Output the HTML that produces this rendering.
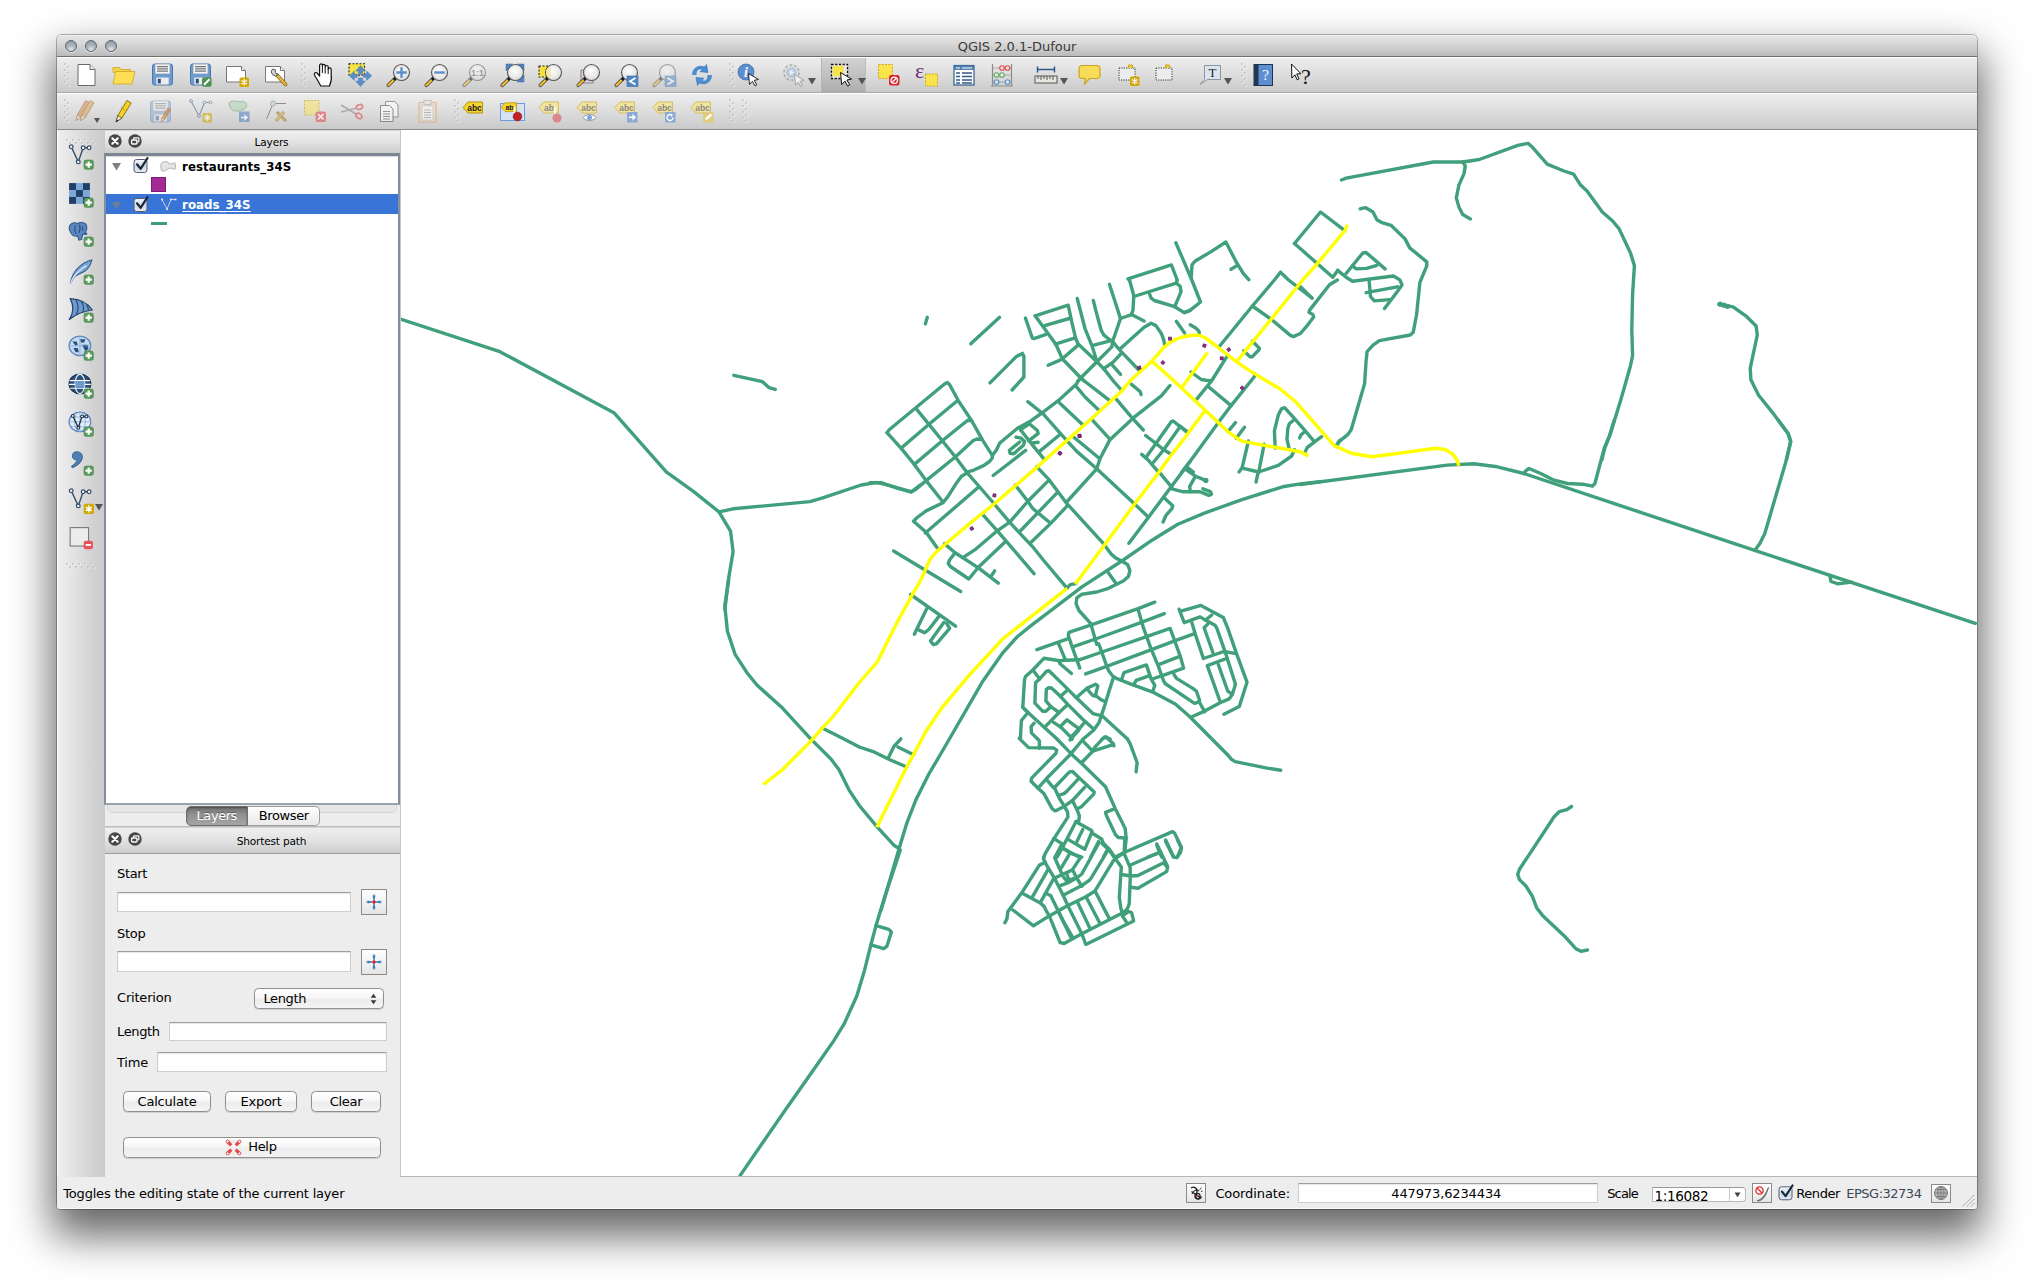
<!DOCTYPE html>
<html lang="en">
<head>
<meta charset="utf-8">
<title>QGIS 2.0.1-Dufour</title>
<style>
*{box-sizing:border-box;margin:0;padding:0}
html,body{width:2034px;height:1288px;overflow:hidden;background:#fff}
body{font-family:"DejaVu Sans","Liberation Sans",sans-serif;color:#000;position:relative}
.abs{position:absolute}
#win{position:absolute;left:57px;top:35px;width:1920px;height:1174px;background:#ededed;border-radius:5px 5px 4px 4px;
 box-shadow:0 0 0 1px rgba(0,0,0,.28),0 22px 42px 5px rgba(0,0,0,.6)}
#title{position:absolute;left:0;top:0;width:1920px;height:22px;border-radius:5px 5px 0 0;
 background:linear-gradient(#e6e6e6,#dbdbdb 35%,#cbcbcb 68%,#bababa);border-bottom:1px solid #6e6e6e;box-shadow:inset 0 1px 0 #f0f0f0}
#title .t{position:absolute;left:0;width:1920px;top:3.500px;text-align:center;font-size:13px;color:#3a3a3a;letter-spacing:0;line-height:16px}
.tl{position:absolute;top:5px;width:12px;height:12px;border-radius:50%;border:1px solid #5d6770;
 background:radial-gradient(circle at 50% 85%,#dfe6ec 0,#a9b4be 45%,#8894a0 100%);box-shadow:0 1px 0 rgba(255,255,255,.5)}
.tbar{position:absolute;left:0;width:1920px;background:linear-gradient(#ededed,#dddddd 50%,#cacaca);border-top:1px solid #fff;border-bottom:1px solid #a8a8a8}
#tb1{top:22px;height:36px}
#tb2{top:58px;height:37px;border-bottom-color:#8c8c8c}
#ltb{position:absolute;left:0;top:95px;width:47.500px;height:1046.500px;background:linear-gradient(90deg,#fff 0,#fff 1px,#efefef 1px,#e4e4e4 31%,#dbdbdb 53%,#d2d2d2 74%,#cbcbcb 100%)}
#lpanel{position:absolute;left:48px;top:94px;width:296px;height:1048px;background:#ededed;border-right:2px solid #9a9da2}
#map{position:absolute;left:344px;top:95px;width:1576px;height:1046px;background:#fff;overflow:hidden}
#status{position:absolute;left:0;top:1141px;width:1920px;height:33px;background:#ededed;border-top:1px solid #b9b9b9;border-radius:0 0 4px 4px;font-size:13px}
.dh{position:absolute;left:0;width:294px;height:25px;background:linear-gradient(#f4f4f4,#e3e3e3 50%,#cdcdcd);border-bottom:1px solid #9b9b9b;border-top:1px solid #c9c9c9}
.dh .t{position:absolute;left:0;width:100%;text-align:center;top:5px;font-size:11px;padding-left:38px}
.cb{position:absolute;width:14px;height:14px;border-radius:50%;background:#3f3f3f}
.lbl{position:absolute;font-size:13px;white-space:nowrap}
.inp{position:absolute;background:#fff;border:1px solid #c6c6c6;border-top-color:#a5a5a5;box-shadow:inset 0 1px 1px rgba(0,0,0,.08)}
.btn{position:absolute;height:20px;border:1px solid #9a9a9a;border-radius:4px;background:linear-gradient(#fff,#f3f3f3 50%,#e6e6e6 51%,#f1f1f1);font-size:13px;text-align:center;line-height:18px;box-shadow:0 1px 0 rgba(0,0,0,.08)}
.sq{position:absolute;border:1px solid #8e8e8e;background:linear-gradient(#fdfdfd,#ececec)}
svg{position:absolute;overflow:visible}
</style>
</head>
<body>
<div id="win">
<div id="title"><div class="tl" style="left:8px"></div><div class="tl" style="left:28px"></div><div class="tl" style="left:48px"></div><div class="t">QGIS 2.0.1-Dufour</div></div>
<div class="tbar" id="tb1"></div>
<div class="tbar" id="tb2"></div>
<div id="ltb"></div>
<svg width="0" height="0" style="position:absolute"><defs>
<linearGradient id="gy" x1="0" y1="0" x2="0" y2="1"><stop offset="0" stop-color="#ffe680"/><stop offset="1" stop-color="#f3cf3f"/></linearGradient>
<radialGradient id="gl" cx=".45" cy=".4" r=".6"><stop offset="0" stop-color="#fff"/><stop offset="1" stop-color="#dcdcdc"/></radialGradient>
<g id="hd"><circle cx="1.5" cy="1.5" r="1.1" fill="#fff"/><circle cx="1" cy="1" r=".9" fill="#b9b9b9"/></g>
<g id="hv"><use href="#hd" x="0" y="0"/><use href="#hd" x="3" y="3"/><use href="#hd" x="0" y="6"/><use href="#hd" x="3" y="9"/><use href="#hd" x="0" y="12"/><use href="#hd" x="3" y="15"/><use href="#hd" x="0" y="18"/><use href="#hd" x="3" y="21"/></g>
<g id="hh"><use href="#hd" x="0" y="0"/><use href="#hd" x="3" y="3"/><use href="#hd" x="6" y="0"/><use href="#hd" x="9" y="3"/><use href="#hd" x="12" y="0"/><use href="#hd" x="15" y="3"/><use href="#hd" x="18" y="0"/><use href="#hd" x="21" y="3"/><use href="#hd" x="24" y="0"/><use href="#hd" x="27" y="3"/></g>
<g id="plus"><rect x=".3" y=".3" width="8.600" height="8.600" rx="1.800" fill="#5a9a5d" stroke="#4a8a4e" stroke-width=".6"/><path d="M4.600 1.700v5.800M1.700 4.600h5.800" stroke="#fff" stroke-width="2"/></g>
<g id="star"><rect x="0" y="0" width="9.5" height="9.5" rx="1.5" fill="#d1a80a"/><path d="M4.75 1.5v6.5M1.9 3.1l5.7 3.3M7.6 3.1L1.9 6.4" stroke="#fff" stroke-width="1.2"/></g>
<g id="mag"><path d="M2.300 22.300l6.300-6.300" stroke="#3a3a3a" stroke-width="3.600" stroke-linecap="round"/><path d="M2.300 22.300l5.400-5.400" stroke="#f4c430" stroke-width="2.100" stroke-linecap="round"/><circle cx="8.900" cy="15.900" r="1.500" fill="#111"/><circle cx="15.500" cy="9.500" r="8" fill="url(#gl)" stroke="#555" stroke-width="1.100"/></g>
<g id="tag"><path d="M0 6.5L5 1h14.5v11H5z" fill="#f6d32d" stroke="#b8960f" stroke-width="1"/></g>
<g id="tagd"><path d="M0 6.5L5 1h14.5v11H5z" fill="#f3e49b" stroke="#d1bf6d" stroke-width="1"/></g>
<g id="arr"><path d="M0 0h8L4 6.500z" fill="#555"/></g>
<g id="fl"><rect x=".5" y=".5" width="20" height="21" rx="2.2" fill="#6e9bce" stroke="#4a77ad"/><rect x="3.3" y=".8" width="14.4" height="9.4" fill="#f4f4f4" stroke="#c9c9c9" stroke-width=".5"/><path d="M5 3.2h11M5 5.4h11M5 7.6h11" stroke="#555" stroke-width="1"/><rect x="4.3" y="14" width="12.4" height="7" fill="#ececec"/><rect x="5.8" y="15.3" width="3" height="4.6" fill="#2d4f7c"/></g>
<g id="pg"><path d="M1.5 .5h12l5 5v16h-17z" fill="#fff" stroke="#6a6a6a"/><path d="M13.5 .5v5h5" fill="#eee" stroke="#6a6a6a"/></g>
</defs></svg>

<svg width="6" height="24" style="left:7px;top:28px"><use href="#hv"/></svg>
<svg width="6" height="24" style="left:244px;top:28px"><use href="#hv"/></svg>
<svg width="6" height="24" style="left:672px;top:28px"><use href="#hv"/></svg>
<svg width="6" height="24" style="left:1184px;top:28px"><use href="#hv"/></svg>
<svg width="24" height="24" viewBox="0 0 24 24" style="left:17px;top:28px"><use href="#pg" x="2.5" y="1"/></svg>
<svg width="24" height="24" viewBox="0 0 24 24" style="left:55px;top:26.5px"><path d="M1 5.5h6.5l1.5 2h9.5v3H1z" fill="#f5d33f" stroke="#c9a72a" stroke-width=".8"/><path d="M3.5 9.5h19.5l-3 12.5H1z" fill="#ffdd55" stroke="#c9a72a" stroke-width=".8"/></svg>
<svg width="24" height="24" viewBox="0 0 24 24" style="left:93px;top:28px"><use href="#fl" x="2" y="0.5"/></svg>
<svg width="24" height="24" viewBox="0 0 24 24" style="left:131px;top:28px"><use href="#fl" x="2" y="0.5"/><rect x="14" y="14.3" width="9.6" height="9.4" rx="2" fill="#4f9150"/><path d="M16 21.7l5.6-5.4" stroke="#fff" stroke-width="2"/></svg>
<svg width="24" height="24" viewBox="0 0 24 24" style="left:168px;top:28px"><path d="M1.5 3.5h15l4 4v11.5h-19z" fill="#fff" stroke="#777"/><path d="M16.5 3.5v4h4" fill="#eee" stroke="#777"/><use href="#star" x="14.5" y="14.5"/></svg>
<svg width="24" height="24" viewBox="0 0 24 24" style="left:207px;top:28px"><path d="M1.5 3.5h15l4 4v11.5h-19z" fill="#fff" stroke="#777"/><path d="M16.5 3.5v4h4" fill="#eee" stroke="#777"/><path d="M13 12l8.5 9.5" stroke="#8a6d1f" stroke-width="3.8" stroke-linecap="round"/><path d="M13.5 12.5l8 9" stroke="#e9b93a" stroke-width="2.2" stroke-linecap="round"/><path d="M8.5 6a4 4 0 1 0 6 5.5l-2.2-.5-1.2-1.8.6-2.2z" fill="#d9d9d9" stroke="#555" stroke-width="1"/></svg>
<svg width="24" height="24" viewBox="0 0 24 24" style="left:255px;top:28px"><path d="M8.800 23C7.500 20.500 5 16 3 13C1.600 10.800 3 8.500 5 10L7.600 13V2.600C7.600 .4 10.400 .4 10.400 2.600V3C10.400 .8 13.200 .8 13.200 3V4C13.200 2 16.200 2 16.200 4V6.300C16.200 4.300 19.200 4.300 19.200 6.300V12C19.700 15 19.200 19 17.500 23Z" fill="#fff" stroke="#111" stroke-width="1.200" stroke-linejoin="round"/><path d="M10.400 3V10M13.200 4V10.500M16.200 6V11" stroke="#111" stroke-width="1"/></svg>
<svg width="24" height="24" viewBox="0 0 24 24" style="left:291px;top:28px"><path d="M1 .7h15.500v11.500H1z" fill="#f7e444" stroke="#222" stroke-width="1.100" stroke-dasharray="2 1.500"/><g fill="#5b8fc9" stroke="#4377b3" stroke-width=".5"><path d="M12.500 2.500l4.800 5.500h-2.800v3.500h-4v-3.500H7.700z"/><path d="M12.500 23.500l4.800-5.500h-2.800v-3h-4v3H7.700z"/><path d="M23.700 12.800l-5-4.600v2.800h-3v3.600h3v2.800z"/><path d="M1.300 12.800l5-4.600v2.800h3v3.600h-3v2.800z"/></g></svg>
<svg width="24" height="24" viewBox="0 0 24 24" style="left:329px;top:28px"><use href="#mag"/><path d="M15.500 4.300v10.400M10.300 9.500h10.400" stroke="#5b8fc9" stroke-width="2.400"/></svg>
<svg width="24" height="24" viewBox="0 0 24 24" style="left:367px;top:28px"><use href="#mag"/><path d="M10.300 9.500h10.400" stroke="#5b8fc9" stroke-width="2.400"/></svg>
<svg width="24" height="24" viewBox="0 0 24 24" style="left:405px;top:28px"><g opacity=".55"><use href="#mag"/></g><text x="15.500" y="12.800" font-family="Liberation Sans,sans-serif" font-weight="bold" font-size="8.500" text-anchor="middle" fill="#9a9a9a">1:1</text></svg>
<svg width="24" height="24" viewBox="0 0 24 24" style="left:443px;top:28px"><g fill="#4f86c6" stroke="#3a6aa5" stroke-width=".5"><path d="M6 1h7l-2.500 2.500 3 3-2 2-3-3L6 8z"/><path d="M24 1h-7l2.500 2.500-3 3 2 2 3-3L24 8z"/><path d="M24 19v-7l-2.500 2.500-3-3-2 2 3 3L17 19z"/></g><use href="#mag"/></svg>
<svg width="24" height="24" viewBox="0 0 24 24" style="left:481px;top:28px"><path d="M1 3h11v11H1z" fill="#f7e03c" stroke="#222" stroke-width="1.100" stroke-dasharray="2 1.500"/><use href="#mag"/><path d="M8 9.500a6.500 6.500 0 0 1 3-5.500h2v11h-2a6.500 6.500 0 0 1-3-5.500z" fill="#f3e7a3" opacity=".9"/></svg>
<svg width="24" height="24" viewBox="0 0 24 24" style="left:519px;top:28px"><path d="M5 7h12v13H5z" fill="#d9cfd9" stroke="#8b7b8b"/><use href="#mag"/></svg>
<svg width="24" height="24" viewBox="0 0 24 24" style="left:557px;top:28px"><use href="#mag"/><rect x="13" y="13" width="11" height="10.500" fill="#4f86c6" stroke="#3a6aa5" stroke-width=".6"/><path d="M21.500 15l-5.500 3.300 5.500 3.300" fill="none" stroke="#fff" stroke-width="1.800"/></svg>
<svg width="24" height="24" viewBox="0 0 24 24" style="left:595px;top:28px"><g opacity=".5"><use href="#mag"/><rect x="13" y="13" width="11" height="10.500" fill="#4f86c6" stroke="#3a6aa5" stroke-width=".6"/><path d="M15.500 15l5.500 3.300-5.500 3.300" fill="none" stroke="#fff" stroke-width="1.800"/></g></svg>
<svg width="24" height="24" viewBox="0 0 24 24" style="left:633px;top:28px"><g fill="#4a8fd6" stroke="#2f6fb5" stroke-width=".6"><path d="M2.500 11.500C2.500 5 9 1.500 14.500 4l2-2.500 1.500 8-8-.8 2.300-2.300C8 4.800 5.500 8 6.300 11.500z"/><path d="M21.500 12.500C21.500 19 15 22.500 9.500 20l-2 2.500-1.500-8 8 .8-2.300 2.300c4.300 1.600 6.800-1.600 6-5.100z"/></g></svg>
<svg width="24" height="24" viewBox="0 0 24 24" style="left:680px;top:28px"><circle cx="9" cy="9" r="8" fill="#5b8fd0" stroke="#3c6fb0" stroke-width=".8"/><text x="9" y="14" font-family="Liberation Serif,serif" font-style="italic" font-weight="bold" font-size="14" text-anchor="middle" fill="#fff">i</text><path d="M11.500 10.500l10 6-4.300.8 2.600 4.600-1.800 1-2.600-4.600-2.900 3.200z" fill="#fff" stroke="#111" stroke-width=".9" stroke-linejoin="round"/></svg>
<svg width="24" height="24" viewBox="0 0 24 24" style="left:725px;top:28px"><g opacity=".6"><circle cx="9.500" cy="9.500" r="7.500" fill="#e6e6e6" stroke="#8a8a8a" stroke-width="1.600" stroke-dasharray="3 1.700"/><circle cx="9.500" cy="9.500" r="4.800" fill="#a9c4e6" stroke="#7da0cc"/><path d="M8 7l4 2.500L8 12z" fill="#fff"/><path d="M12.500 11.500l9.500 6-4 .8 2.400 4.400-1.700.9-2.400-4.400-2.700 3z" fill="#fff" stroke="#777" stroke-width=".9" stroke-linejoin="round"/></g></svg>
<svg width="8" height="7" style="left:751px;top:42.5px"><use href="#arr"/></svg>
<div class="abs" style="left:764px;top:23px;width:45px;height:34px;background:linear-gradient(#d2d2d2,#bdbdbd 60%,#adadad);border-left:1px solid #b5b5b5;border-right:1px solid #bcbcbc"></div>
<svg width="24" height="24" viewBox="0 0 24 24" style="left:773px;top:28px"><rect x="1.500" y="1.500" width="16" height="14" fill="#e8e8e8" stroke="#111" stroke-width="1.300" stroke-dasharray="2.200 1.500"/><rect x="2.800" y="2.800" width="11" height="10.500" fill="#f7e34a"/><path d="M10.500 9.500l11 6.600-4.600.9 2.800 5-2 1.100-2.800-5-3.200 3.500z" fill="#fff" stroke="#111" stroke-width="1" stroke-linejoin="round"/></svg>
<svg width="8" height="7" style="left:801px;top:42.5px"><use href="#arr"/></svg>
<svg width="24" height="24" viewBox="0 0 24 24" style="left:820px;top:28px"><rect x="1.500" y="1.500" width="14" height="14" fill="#fbe34c" stroke="#c8a62a" stroke-width="1" stroke-dasharray="2 1.300"/><rect x="12" y="12" width="10.500" height="10.500" rx="2.200" fill="#d9232e"/><circle cx="17.250" cy="17.250" r="3.200" fill="none" stroke="#fff" stroke-width="1.300"/><path d="M15 19.500l4.500-4.500" stroke="#fff" stroke-width="1.300"/></svg>
<svg width="24" height="24" viewBox="0 0 24 24" style="left:858px;top:28px"><text x="0" y="15" font-family="Liberation Serif,serif" font-size="22" fill="#6b2d7a">ε</text><rect x="10.500" y="11" width="12" height="12" fill="#fbe34c" stroke="#c8a62a" stroke-width="1" stroke-dasharray="2 1.300"/></svg>
<svg width="24" height="24" viewBox="0 0 24 24" style="left:895px;top:28px"><rect x="2" y="2.500" width="20" height="19.500" fill="#fff" stroke="#2f5b8a" stroke-width="1.200"/><rect x="2" y="2.500" width="20" height="4.500" fill="#4f7fb5"/><path d="M4 5h4M10 5h10" stroke="#fff" stroke-width="1"/><path d="M4 10h4M10 10h10M4 13.500h4M10 13.500h10M4 17h4M10 17h10M4 20h4M10 20h10" stroke="#2f5b8a" stroke-width="1.400"/></svg>
<svg width="24" height="24" viewBox="0 0 24 24" style="left:933px;top:28px"><path d="M2.500 1v22M21.500 1v22M1 23h22" stroke="#8a8a8a" stroke-width="1.200" fill="none"/><path d="M2.500 5h19M2.500 12h19M2.500 19h19" stroke="#9a9a9a" stroke-width=".8"/><g fill="#f3d9d9" stroke="#d9534f" stroke-width="1.100"><circle cx="12" cy="5" r="2.300"/><circle cx="17.500" cy="5" r="2.300"/></g><g fill="#dcefd9" stroke="#6aa86a" stroke-width="1.100"><circle cx="6.500" cy="12" r="2.300"/><circle cx="12" cy="12" r="2.300"/></g><g fill="#d9e6f3" stroke="#5b8fc0" stroke-width="1.100"><circle cx="6.500" cy="19" r="2.300"/><circle cx="17.500" cy="19" r="2.300"/></g></svg>
<svg width="24" height="24" viewBox="0 0 24 24" style="left:977px;top:28px"><path d="M3.500 6.500h17M3.500 3.500v6M20.500 3.500v6" stroke="#2f5b8a" stroke-width="1.500" fill="none"/><rect x="1" y="13" width="22" height="7" fill="#e6e8dc" stroke="#555" stroke-width="1"/><path d="M4 13v3M7 13v4M10 13v3M13 13v4M16 13v3M19 13v4" stroke="#555" stroke-width="1"/></svg>
<svg width="8" height="7" style="left:1003px;top:42.5px"><use href="#arr"/></svg>
<svg width="24" height="24" viewBox="0 0 24 24" style="left:1021px;top:28px"><path d="M4 2.500h15a3 3 0 0 1 3 3v7a3 3 0 0 1-3 3h-7.500l-5 5.500 1-5.500H4a3 3 0 0 1-3-3v-7a3 3 0 0 1 3-3z" fill="#f7dc5a" stroke="#c9a51c" stroke-width="1.200"/></svg>
<svg width="24" height="24" viewBox="0 0 24 24" style="left:1060px;top:28px"><rect x="2" y="5" width="16" height="12" fill="#ececec" stroke="#333" stroke-width="1" stroke-dasharray="1.200 1.200"/><path d="M11.500 5V2h4v3" fill="#f2c935" stroke="#c9a51c" stroke-width="1"/><use href="#star" x="13" y="13.500"/></svg>
<svg width="24" height="24" viewBox="0 0 24 24" style="left:1096px;top:28px"><rect x="3" y="5" width="16" height="12" fill="#ececec" stroke="#333" stroke-width="1" stroke-dasharray="1.200 1.200"/><path d="M12.500 5V2h4v3" fill="#f2c935" stroke="#c9a51c" stroke-width="1"/></svg>
<svg width="24" height="24" viewBox="0 0 24 24" style="left:1142px;top:28px"><path d="M5.500 2.500h16v14h-13l-7.500 5 4.500-5z" fill="#dbe6f0" stroke="#8a959f" stroke-width="1"/><text x="13.500" y="14" font-family="Liberation Serif,serif" font-size="13" text-anchor="middle" fill="#222">T</text></svg>
<svg width="8" height="7" style="left:1167px;top:42.5px"><use href="#arr"/></svg>
<svg width="24" height="24" viewBox="0 0 24 24" style="left:1194px;top:28px"><rect x="3" y="1.500" width="18.500" height="21" fill="#5b8fd0" stroke="#1d3350" stroke-width="1"/><rect x="3" y="1.500" width="4.500" height="21" fill="#22384f"/><text x="14.500" y="17" font-family="Liberation Serif,serif" font-size="15" text-anchor="middle" fill="#fff">?</text></svg>
<svg width="24" height="24" viewBox="0 0 24 24" style="left:1232px;top:28px"><path d="M2.500 1l9.500 9.800-4.300.1 2.300 5-1.800.9-2.300-5-3 3.200z" fill="#fff" stroke="#111" stroke-width="1" stroke-linejoin="round"/><text x="17" y="21" font-family="Liberation Serif,serif" font-size="22" text-anchor="middle" fill="#111">?</text></svg>
<svg width="6" height="24" style="left:7px;top:64px"><use href="#hv"/></svg>
<svg width="6" height="24" style="left:397px;top:64px"><use href="#hv"/></svg>
<svg width="6" height="24" style="left:672px;top:64px"><use href="#hv"/></svg>
<svg width="6" height="24" style="left:685px;top:64px"><use href="#hv"/></svg>
<svg width="24" height="24" viewBox="0 0 24 24" style="left:18px;top:64px"><g opacity=".55"><path d="M1 21.500l1.200-5.500 8.500-14.500 3.800 2.200-8.500 14.500z" fill="#d98a4a" stroke="#8a5a2a" stroke-width=".8"/><path d="M1 21.500l1.200-5.500 3.800 2.200z" fill="#f3e2c0" stroke="#8a5a2a" stroke-width=".6"/><path d="M5.5 21.500l1.200-5.500 8.500-14.500 3.800 2.200-8.500 14.500z" fill="#e0a45a" stroke="#8a5a2a" stroke-width=".8"/><path d="M5.5 21.500l1.200-5.500 3.800 2.200z" fill="#f3e2c0" stroke="#8a5a2a" stroke-width=".6"/></g></svg>
<svg width="6" height="5" viewBox="0 0 8 6.5" style="left:36.5px;top:83px"><use href="#arr"/></svg>
<svg width="24" height="24" viewBox="0 0 24 24" style="left:55px;top:64px"><path d="M4 23l1.800-6.500L15 1.500l4.200 2.500-9.200 15z" fill="#f5d21f" stroke="#7a6a10" stroke-width=".9"/><path d="M9 8.500l4.200 2.500" stroke="#b89c14" stroke-width=".8"/><path d="M4 23l1.800-6.500 4.200 2.500z" fill="#f3e2c0" stroke="#444" stroke-width=".7"/><path d="M4 23l.7-2.600 1.700 1z" fill="#222"/></svg>
<svg width="24" height="24" viewBox="0 0 24 24" style="left:92px;top:64px"><g opacity=".42"><use href="#fl" x="1" y="1.500"/></g><g opacity=".7" transform="translate(9.500,8) scale(.68)"><path d="M4 21.500l1.200-5.500 8.500-14.500 3.800 2.200-8.500 14.500z" fill="#e08a3a" stroke="#8a5a2a" stroke-width=".8"/><path d="M4 21.500l1.200-5.500 3.800 2.200z" fill="#f3e2c0" stroke="#8a5a2a" stroke-width=".6"/></g></svg>
<svg width="24" height="24" viewBox="0 0 24 24" style="left:132px;top:64px"><g opacity=".6"><path d="M2 2l8 15 5.500-13.500h6" fill="none" stroke="#4a6a8a" stroke-width="1.100"/><circle cx="2" cy="2" r="1.400" fill="#fff" stroke="#4a6a8a"/><circle cx="10" cy="17" r="1.400" fill="#fff" stroke="#4a6a8a"/><circle cx="15.500" cy="3.500" r="1.400" fill="#fff" stroke="#4a6a8a"/><circle cx="21.500" cy="3.500" r="1.400" fill="#fff" stroke="#4a6a8a"/><use href="#star" x="13.500" y="14"/></g></svg>
<svg width="24" height="24" viewBox="0 0 24 24" style="left:169px;top:64px"><g opacity=".6"><path d="M3 5c0-4 6-3 9-2.500s8-1 8.500 3-3 5-6 6-10 2-11.500-6.500z" fill="#b5d3b5" stroke="#7da07d" stroke-width="1"/><rect x="13" y="12.500" width="10.500" height="10.500" fill="#5b86c0"/><path d="M15 17.700h3.500v-2.700l3.500 3.500-3.500 3.500v-2.700H15z" fill="#fff"/></g></svg>
<svg width="24" height="24" viewBox="0 0 24 24" style="left:208px;top:64px"><g opacity=".6"><path d="M1.500 20L8 4.500h13" fill="none" stroke="#555" stroke-width="1"/><circle cx="8" cy="4.500" r="2.600" fill="#b5d3b5" stroke="#7da07d"/><path d="M11 22l8-9M12 13l9 9" stroke="#8a6d1f" stroke-width="3"/><path d="M11.500 21.500l7-8" stroke="#e9c93a" stroke-width="1.600"/><path d="M13 14l7.500 7.500" stroke="#e08a3a" stroke-width="1.600"/></g></svg>
<svg width="24" height="24" viewBox="0 0 24 24" style="left:246px;top:64px"><g opacity=".65"><rect x="1.500" y="1.500" width="14.500" height="14.500" fill="#f3e27a" stroke="#c8a62a" stroke-width="1" stroke-dasharray="2 1.300"/><rect x="12.500" y="12.500" width="10.500" height="10.500" rx="2" fill="#e05a5f"/><path d="M15 15l5.500 5.500M20.500 15L15 20.500" stroke="#fff" stroke-width="1.700"/></g></svg>
<svg width="24" height="24" viewBox="0 0 24 24" style="left:283px;top:64px"><g opacity=".6"><path d="M1 6l15 9M1 13l16-4" stroke="#8a8a8a" stroke-width="1.500"/><ellipse cx="19.500" cy="8" rx="3.200" ry="2.300" fill="none" stroke="#d9534f" stroke-width="1.700" transform="rotate(-20 19.500 8)"/><ellipse cx="19" cy="17" rx="3.200" ry="2.300" fill="none" stroke="#d9534f" stroke-width="1.700" transform="rotate(35 19 17)"/></g></svg>
<svg width="24" height="24" viewBox="0 0 24 24" style="left:321px;top:64px"><g opacity=".6"><path d="M7.500 2.500h9l3.500 3.500v12h-12.500z" fill="#fff" stroke="#555" stroke-width=".9"/><path d="M2.500 6.500h9l3.500 3.500v12.500H2.500z" fill="#fff" stroke="#444" stroke-width=".9"/><path d="M5 12.500h7M5 15h7M5 17.500h7M5 20h7" stroke="#555" stroke-width=".9"/></g></svg>
<svg width="24" height="24" viewBox="0 0 24 24" style="left:359px;top:64px"><g opacity=".55"><rect x="3" y="3.500" width="17" height="19.500" rx="1" fill="#f0d9c0" stroke="#d99a5a" stroke-width="1.200"/><rect x="8" y="1.500" width="7" height="4" fill="#e6e6e6" stroke="#999" stroke-width=".8"/><rect x="6" y="7" width="11" height="14" fill="#fff" stroke="#aaa" stroke-width=".7"/><path d="M8 11h7M8 13.500h7M8 16h7M8 18.500h7" stroke="#888" stroke-width=".9"/></g></svg>
<svg width="24" height="24" viewBox="0 0 24 24" style="left:405px;top:64px"><use href="#tag" x="1" y="2"/><text x="12.5" y="12" font-family="Liberation Sans,sans-serif" font-weight="bold" font-size="8.500" text-anchor="middle" fill="#222">abc</text></svg>
<div class="abs" style="left:443px;top:68px;width:25px;height:18px;background:#d5e3f5;border:1px solid #6b9be0"></div>
<svg width="24" height="24" viewBox="0 0 24 24" style="left:443px;top:64px"><g transform="translate(1,3) scale(.8)"><use href="#tag"/></g><text x="9.500" y="11" font-family="Liberation Sans,sans-serif" font-weight="bold" font-size="7" text-anchor="middle" fill="#222">ab</text><path d="M14.500 8v6" stroke="#fff" stroke-width="1.600"/><circle cx="17.500" cy="17.500" r="4.300" fill="#c4202a" stroke="#8a1219" stroke-width=".7"/></svg>
<svg width="24" height="24" viewBox="0 0 24 24" style="left:481px;top:64px"><use href="#tagd" x="1" y="2"/><text x="11" y="12" font-family="Liberation Sans,sans-serif" font-weight="bold" font-size="8.500" text-anchor="middle" fill="#8a8a8a">ab</text><path d="M17 8v7" stroke="#fff" stroke-width="1.600"/><circle cx="19" cy="19" r="4.500" fill="#d9878c"/></svg>
<svg width="24" height="24" viewBox="0 0 24 24" style="left:519px;top:64px"><use href="#tagd" x="1" y="2"/><text x="12.5" y="12" font-family="Liberation Sans,sans-serif" font-weight="bold" font-size="8.500" text-anchor="middle" fill="#8a8a8a">abc</text><path d="M7 18.500c3-4 10-4 13 0-3 4-10 4-13 0z" fill="#fff" stroke="#888" stroke-width=".9"/><circle cx="13.500" cy="18.500" r="2.600" fill="#7da7d9"/></svg>
<svg width="24" height="24" viewBox="0 0 24 24" style="left:557px;top:64px"><use href="#tagd" x="1" y="2"/><text x="12.5" y="12" font-family="Liberation Sans,sans-serif" font-weight="bold" font-size="8.500" text-anchor="middle" fill="#8a8a8a">abc</text><rect x="13" y="13" width="10.500" height="10.500" fill="#8aa9d3"/><path d="M15 18.200h3.500v-2.700l3.500 3.500-3.500 3.500v-2.700H15z" fill="#fff" transform="translate(0,-.800)"/></svg>
<svg width="24" height="24" viewBox="0 0 24 24" style="left:595px;top:64px"><use href="#tagd" x="1" y="2"/><text x="12.5" y="12" font-family="Liberation Sans,sans-serif" font-weight="bold" font-size="8.500" text-anchor="middle" fill="#8a8a8a">abc</text><rect x="13" y="13" width="10.500" height="10.500" fill="#8aa9d3"/><path d="M21 18.500a3 3 0 1 1-1.500-2.600" fill="none" stroke="#fff" stroke-width="1.400"/><path d="M18.500 14.500l2.500 1.500-2 2z" fill="#fff"/></svg>
<svg width="24" height="24" viewBox="0 0 24 24" style="left:633px;top:64px"><use href="#tagd" x="1" y="2"/><text x="12.5" y="12" font-family="Liberation Sans,sans-serif" font-weight="bold" font-size="8.500" text-anchor="middle" fill="#8a8a8a">abc</text><rect x="13" y="13" width="10.500" height="10.500" fill="#e0cc7a"/><path d="M15 21.500l1-3 4.500-4 1.800 1.800-4.500 4z" fill="#fff"/></svg>
<svg width="30" height="6" style="left:9px;top:104px"><use href="#hh"/></svg>
<svg width="30" height="6" style="left:9px;top:528px"><use href="#hh"/></svg>
<svg width="26" height="26" viewBox="0 0 24 24" style="left:11px;top:109.3px"><path d="M3 2.500l6.500 14L14 3.500h5.500" fill="none" stroke="#34506b" stroke-width="1.300"/><g fill="#fff" stroke="#34506b" stroke-width="1.200"><circle cx="3" cy="2.500" r="1.700"/><circle cx="9.500" cy="16.500" r="1.700"/><circle cx="14" cy="3.500" r="1.700"/><circle cx="19.500" cy="3.500" r="1.700"/></g><use href="#plus" x="14.500" y="14.500"/></svg>
<svg width="26" height="26" viewBox="0 0 24 24" style="left:11px;top:147.45px"><rect x="1" y="1" width="6.400" height="6.400" fill="#1f3f66"/><rect x="1" y="7.4" width="6.400" height="6.400" fill="#7da7d9"/><rect x="1" y="13.8" width="6.400" height="6.400" fill="#1f3f66"/><rect x="7.4" y="1" width="6.400" height="6.400" fill="#7da7d9"/><rect x="7.4" y="7.4" width="6.400" height="6.400" fill="#1f3f66"/><rect x="7.4" y="13.8" width="6.400" height="6.400" fill="#7da7d9"/><rect x="13.8" y="1" width="6.400" height="6.400" fill="#1f3f66"/><rect x="13.8" y="7.4" width="6.400" height="6.400" fill="#7da7d9"/><rect x="13.8" y="13.8" width="6.400" height="6.400" fill="#1f3f66"/><use href="#plus" x="14.500" y="14.500"/></svg>
<svg width="26" height="26" viewBox="0 0 24 24" style="left:11px;top:185.6px"><path d="M2 3.500C4 1 7 1.200 8.500 2.500C10.500 1 14.500 1 16.500 3C18 5 17.500 9 15.800 10.800L17.300 11.300L17 12.300L14 12C13 13 13 15 12.600 17L10 17.600L9 14C6 14.500 3.500 13 2.300 10.500C1 8 1 5 2 3.500Z" fill="#5b86c0" stroke="#2f5b8a" stroke-width="1"/><path d="M7 4C6 7 6.300 10 7.500 11.500M10.500 3.500C11.500 6 11 9 10 11M13.500 5c.5 1.500 .3 3-.3 4" fill="none" stroke="#27507f" stroke-width="1"/><use href="#plus" x="14.500" y="14.500"/></svg>
<svg width="26" height="26" viewBox="0 0 24 24" style="left:11px;top:223.75px"><path d="M2 23c1-6 3-11 8-15.500S19.500 1.500 22 1c-1 4-3 8-7 10.500s-8 3-10 6z" fill="#7da7d9" stroke="#2f5b8a" stroke-width="1"/><path d="M2 23c2-6 7-12 15-17" fill="none" stroke="#e6eef8" stroke-width="1"/><use href="#plus" x="14.500" y="14.500"/></svg>
<svg width="26" height="26" viewBox="0 0 24 24" style="left:11px;top:261.9px"><path d="M2 1.500C10 2 18 5 22.500 12C14 13 6 17 1.200 20.800C5 15 5.500 8 2 1.500Z" fill="#6e9bce" stroke="#23466f" stroke-width="1.100" stroke-linejoin="round"/><path d="M7.500 2.800C10 8 9.500 13 7.500 16.500M12.500 4.500C15 9 14.500 12 13.500 14M17.300 7.300C19 10 19 11.500 18.700 12.500" fill="none" stroke="#23466f" stroke-width="1"/><use href="#plus" x="14.500" y="14.500"/></svg>
<svg width="26" height="26" viewBox="0 0 24 24" style="left:11px;top:300.05px"><ellipse cx="11" cy="10" rx="10" ry="9" fill="#c5d9ef" stroke="#5b86c0" stroke-width="1.100"/><path d="M4 6h4l1 3-2 1zM11 4h5l-1 3h-3zM13 9h5l1 4-3 2zM5 12h4l1 4H7z" fill="#2d4f7c"/><path d="M1 10h20M11 1v18" stroke="#7da7d9" stroke-width=".7"/><use href="#plus" x="14.500" y="14.500"/></svg>
<svg width="26" height="26" viewBox="0 0 24 24" style="left:11px;top:338.2px"><ellipse cx="11" cy="10" rx="10" ry="9" fill="#2d4f7c" stroke="#1d3350" stroke-width="1.100"/><path d="M1.500 7h19M1 10.500h20M2 14h18" stroke="#fff" stroke-width="1"/><ellipse cx="11" cy="10" rx="4.500" ry="9" fill="none" stroke="#fff" stroke-width="1"/><rect x="6.800" y="7.500" width="8.400" height="6" fill="#6e9bce"/><use href="#plus" x="14.500" y="14.500"/></svg>
<svg width="26" height="26" viewBox="0 0 24 24" style="left:11px;top:376.35px"><ellipse cx="11" cy="10" rx="10" ry="9" fill="#e6eef8" stroke="#5b86c0" stroke-width="1.100"/><path d="M1 10h20M11 1v18M3 5.500h16M3 14.500h16" stroke="#7da7d9" stroke-width=".7"/><ellipse cx="11" cy="10" rx="5" ry="9" fill="none" stroke="#7da7d9" stroke-width=".7"/><path d="M4.500 4.500l5 11L13 5h4" fill="none" stroke="#1d2f44" stroke-width="1.200"/><g fill="#fff" stroke="#1d2f44"><circle cx="4.500" cy="4.500" r="1.300"/><circle cx="9.500" cy="15.500" r="1.300"/><circle cx="13" cy="5" r="1.300"/><circle cx="17" cy="5" r="1.300"/></g><use href="#plus" x="14.500" y="14.500"/></svg>
<svg width="26" height="26" viewBox="0 0 24 24" style="left:11px;top:414.5px"><path d="M6 2c5-1.500 8.500 2 7 6.500S7 15 4 16.500l-.8-1.500c3-2 5-4 5.200-6C6 9.500 4 8 4 5.500 4 4 4.800 2.500 6 2z" fill="#4f7fb5" stroke="#2f5b8a" stroke-width=".8"/><use href="#plus" x="14.500" y="14.500"/></svg>
<svg width="26" height="26" viewBox="0 0 24 24" style="left:11px;top:452.65px"><path d="M3 2.500l6.500 14L14 3.500h5.500" fill="none" stroke="#34506b" stroke-width="1.300"/><g fill="#fff" stroke="#34506b" stroke-width="1.200"><circle cx="3" cy="2.500" r="1.700"/><circle cx="9.500" cy="16.500" r="1.700"/><circle cx="14" cy="3.500" r="1.700"/><circle cx="19.500" cy="3.500" r="1.700"/></g><use href="#star" x="14.500" y="14.500"/></svg>
<svg width="8" height="7" style="left:37.5px;top:468.5px"><use href="#arr"/></svg>
<svg width="26" height="26" viewBox="0 0 24 24" style="left:11px;top:490.8px"><rect x="2" y="1.500" width="17" height="17" fill="#ececec" stroke="#777" stroke-width="1"/><rect x="14.500" y="13.500" width="8.500" height="8" rx="2" fill="#e8525a"/><path d="M16.300 17.500h5" stroke="#fff" stroke-width="1.700"/></svg>
<div class="abs" style="left:47.5px;top:95px;width:295.5px;height:1046.5px;background:#ededed"></div>
<div class="abs" style="left:342.7px;top:95px;width:1.3px;height:1046.5px;background:#c4c6c9"></div>
<div class="abs" style="left:48px;top:95px;width:295px;height:23px;background:linear-gradient(#efefef,#e4e4e4 45%,#cdcdcd);border-top:1px solid #d4d4d4"></div>
<svg width="14" height="14" viewBox="0 0 14 14" style="left:51px;top:98.8px"><circle cx="7" cy="7" r="6.7" fill="#474747"/><path d="M4.300 4.300l5.400 5.400M9.700 4.300l-5.400 5.400" stroke="#fff" stroke-width="2.100" stroke-linecap="round"/></svg>
<svg width="14" height="14" viewBox="0 0 14 14" style="left:71px;top:98.8px"><circle cx="7" cy="7" r="6.7" fill="#474747"/><rect x="3.600" y="6" width="5.300" height="4" rx=".8" fill="none" stroke="#fff" stroke-width="1.300"/><path d="M5.600 5.800V4.600a.8 .8 0 0 1 .8-.8h3.700a.8 .8 0 0 1 .8 .8v2.400a.8 .8 0 0 1-.8 .8h-1" fill="none" stroke="#fff" stroke-width="1.200"/></svg>
<div class="abs" style="left:86px;top:99.4324px;font-size:10.6px;line-height:16px;letter-spacing:-0.2px;white-space:nowrap;;width:257px;text-align:center;">Layers</div>
<div class="abs" style="left:47.3px;top:118px;width:295.4px;height:652px;background:#fff;border:2px solid #848e9a;border-top:3px solid #7d8793;border-bottom-color:#9aa3ad;box-shadow:inset 0 1px 1px rgba(0,0,0,.15)"></div>
<div class="abs" style="left:49.3px;top:159px;width:291.4px;height:20px;background:#3875d7"></div>
<div class="abs" style="left:125.1px;top:124.067px;font-size:13.1px;line-height:16px;letter-spacing:0.05px;white-space:nowrap;font-family:'DejaVu Sans Condensed','DejaVu Sans',sans-serif;font-weight:bold;">restaurants_34S</div>
<div class="abs" style="left:125.1px;top:162.367px;font-size:13.1px;line-height:16px;letter-spacing:0.05px;white-space:nowrap;font-family:'DejaVu Sans Condensed','DejaVu Sans',sans-serif;font-weight:bold;color:#fff;text-decoration:underline;text-underline-offset:1.500px">roads_34S</div>
<svg width="9" height="8" viewBox="0 0 9 8" style="left:55px;top:128.2px"><path d="M0 0h9L4.500 7.500z" fill="#7f7f7f"/></svg>
<svg width="9" height="8" viewBox="0 0 9 8" style="left:55px;top:166.5px"><path d="M0 0h9L4.500 7.500z" fill="#6f7d95"/></svg>
<svg width="17" height="18" viewBox="0 0 17 18" style="left:75.5px;top:121.3px"><defs><linearGradient id="cbg159" x1="0" y1="0" x2="0" y2="1"><stop offset="0" stop-color="#f4f7fa"/><stop offset=".5" stop-color="#cfdae6"/><stop offset="1" stop-color="#e3ebf3"/></linearGradient></defs><rect x="1" y="3.500" width="13" height="13" rx="2.600" fill="url(#cbg159)" stroke="#595a78" stroke-width="1"/><path d="M4 8.300l3.600 4.500 6.900-10.600" fill="none" stroke="#182838" stroke-width="2.200" stroke-linecap="round" stroke-linejoin="round"/></svg>
<svg width="17" height="18" viewBox="0 0 17 18" style="left:75.5px;top:159.6px"><defs><linearGradient id="cbg197" x1="0" y1="0" x2="0" y2="1"><stop offset="0" stop-color="#f4f7fa"/><stop offset=".5" stop-color="#cfdae6"/><stop offset="1" stop-color="#e3ebf3"/></linearGradient></defs><rect x="1" y="3.500" width="13" height="13" rx="2.600" fill="url(#cbg197)" stroke="#595a78" stroke-width="1"/><path d="M4 8.300l3.600 4.500 6.900-10.600" fill="none" stroke="#182838" stroke-width="2.200" stroke-linecap="round" stroke-linejoin="round"/></svg>
<svg width="16.5" height="12" viewBox="0 0 16.5 12" style="left:103px;top:124.5px"><path d="M1.500 3c2.500-2 5-1.800 7 0s4.500 1 6-.5c1.500 1.500 1.300 5 .3 7-2-1.500-5-1.800-7-.5s-4 2.500-5.800 2c-1.500-2.500-1.500-6-.5-8z" fill="#e4e4e4" stroke="#a9a9a9" stroke-width=".9"/></svg>
<svg width="17" height="13" viewBox="0 0 17 13" style="left:103px;top:162px"><path d="M2 2.500l5 9.500L11 2.500h4.500" fill="none" stroke="#c5cbd4" stroke-width="1"/><g fill="#e8e8e8"><circle cx="2" cy="2.500" r="1.100"/><circle cx="7" cy="12" r="1.100"/><circle cx="11" cy="2.500" r="1.100"/><circle cx="15.500" cy="2.500" r="1.100"/></g></svg>
<div class="abs" style="left:94px;top:142px;width:15.3px;height:15.2px;background:#a62a96;border:1px solid #7a1d6e"></div>
<div class="abs" style="left:94px;top:186.8px;width:16px;height:3.3px;background:#3f9c79"></div>
<div class="abs" style="left:50px;top:770px;width:290px;height:7.5px;border:1px solid #d6d6d6;border-top:none;border-radius:0 0 5px 5px;background:#e6e6e6"></div>
<div class="abs" style="left:128.5px;top:770.5px;width:62.5px;height:20px;border:1px solid #6f6f6f;border-radius:5px 0 0 5px;background:linear-gradient(#6f6f6f,#8f8f8f 40%,#a6a6a6);box-shadow:inset 0 1px 2px rgba(0,0,0,.35)"></div>
<div class="abs" style="left:191px;top:770.5px;width:71.5px;height:20px;border:1px solid #9d9d9d;border-left:none;border-radius:0 5px 5px 0;background:linear-gradient(#fff,#f4f4f4 50%,#e9e9e9)"></div>
<div class="abs" style="left:128.5px;top:773.202px;font-size:13px;line-height:16px;letter-spacing:-0.45px;white-space:nowrap;color:#fff;text-shadow:0 -1px 0 rgba(0,0,0,.35);width:62.5px;text-align:center;">Layers</div>
<div class="abs" style="left:191px;top:773.202px;font-size:13px;line-height:16px;letter-spacing:-0.4px;white-space:nowrap;;width:71.5px;text-align:center;">Browser</div>
<div class="abs" style="left:48px;top:791px;width:295px;height:1px;background:#bdbdbd"></div>
<div class="abs" style="left:48px;top:792px;width:295px;height:25.5px;background:linear-gradient(#efefef,#e4e4e4 45%,#cdcdcd);border-top:1px solid #d4d4d4"></div>
<svg width="14" height="14" viewBox="0 0 14 14" style="left:51px;top:797.05px"><circle cx="7" cy="7" r="6.7" fill="#474747"/><path d="M4.300 4.300l5.400 5.400M9.700 4.300l-5.400 5.400" stroke="#fff" stroke-width="2.100" stroke-linecap="round"/></svg>
<svg width="14" height="14" viewBox="0 0 14 14" style="left:71px;top:797.05px"><circle cx="7" cy="7" r="6.7" fill="#474747"/><rect x="3.600" y="6" width="5.300" height="4" rx=".8" fill="none" stroke="#fff" stroke-width="1.300"/><path d="M5.600 5.800V4.600a.8 .8 0 0 1 .8-.8h3.700a.8 .8 0 0 1 .8 .8v2.400a.8 .8 0 0 1-.8 .8h-1" fill="none" stroke="#fff" stroke-width="1.200"/></svg>
<div class="abs" style="left:86px;top:797.682px;font-size:10.6px;line-height:16px;letter-spacing:-0.2px;white-space:nowrap;;width:257px;text-align:center;">Shortest path</div>
<div class="abs" style="left:48px;top:817.5px;width:295px;height:1px;background:#9f9f9f"></div>
<div class="abs" style="left:60px;top:831.102px;font-size:13px;line-height:16px;letter-spacing:-0.35px;white-space:nowrap;">Start</div>
<div class="abs" style="left:60px;top:856.5px;width:234px;height:20.3px;background:#fff;border:1px solid #cdcdcd;border-top-color:#9d9d9d;box-shadow:inset 0 1px 1px rgba(0,0,0,.1)"></div>
<div class="abs" style="left:304px;top:854px;width:26px;height:26px;border:1px solid #8a8a8a;background:linear-gradient(#fefefe,#f0f0f0 60%,#e4e4e4)"></div>
<svg width="16" height="16" viewBox="0 0 16 16" style="left:309px;top:859px"><g fill="#2f8fd6"><path d="M8 7.300L6.400 1.500h3.200zM8 8.700L6.400 14.500h3.200zM7.300 8L1.500 6.400v3.200zM8.700 8l5.800-1.600v3.200z"/></g><path d="M8 0v16M0 8h16" stroke="#3b5f8a" stroke-width=".7"/><circle cx="8" cy="8" r="1.700" fill="#e02020"/></svg>
<div class="abs" style="left:60px;top:891.202px;font-size:13px;line-height:16px;letter-spacing:-0.3px;white-space:nowrap;">Stop</div>
<div class="abs" style="left:60px;top:916.3px;width:234px;height:20.3px;background:#fff;border:1px solid #cdcdcd;border-top-color:#9d9d9d;box-shadow:inset 0 1px 1px rgba(0,0,0,.1)"></div>
<div class="abs" style="left:304px;top:914px;width:26px;height:26px;border:1px solid #8a8a8a;background:linear-gradient(#fefefe,#f0f0f0 60%,#e4e4e4)"></div>
<svg width="16" height="16" viewBox="0 0 16 16" style="left:309px;top:919px"><g fill="#2f8fd6"><path d="M8 7.300L6.400 1.500h3.200zM8 8.700L6.400 14.500h3.200zM7.300 8L1.500 6.400v3.200zM8.700 8l5.800-1.600v3.200z"/></g><path d="M8 0v16M0 8h16" stroke="#3b5f8a" stroke-width=".7"/><circle cx="8" cy="8" r="1.700" fill="#e02020"/></svg>
<div class="abs" style="left:60px;top:955.302px;font-size:13px;line-height:16px;letter-spacing:-0.2px;white-space:nowrap;">Criterion</div>
<div class="abs" style="left:197px;top:953.3px;width:130px;height:20.3px;border:1px solid #8f8f8f;border-radius:4.500px;background:linear-gradient(#ffffff,#f6f6f6 48%,#ececec 52%,#f4f4f4);box-shadow:0 1px 1px rgba(0,0,0,.13)"></div>
<div class="abs" style="left:206.4px;top:955.602px;font-size:13px;line-height:16px;letter-spacing:-0.35px;white-space:nowrap;">Length</div>
<svg width="7" height="12" viewBox="0 0 7 12" style="left:313px;top:957.5px"><path d="M3.500 .8L6.300 4.700H.7zM3.500 11.200L6.300 7.300H.7z" fill="#3a3a3a"/></svg>
<div class="abs" style="left:60px;top:989.302px;font-size:13px;line-height:16px;letter-spacing:-0.35px;white-space:nowrap;">Length</div>
<div class="abs" style="left:112px;top:986.6px;width:218px;height:19.8px;background:#fff;border:1px solid #cdcdcd;border-top-color:#9d9d9d;box-shadow:inset 0 1px 1px rgba(0,0,0,.1)"></div>
<div class="abs" style="left:60px;top:1020px;font-size:13px;line-height:16px;letter-spacing:-0.2px;white-space:nowrap;">Time</div>
<div class="abs" style="left:100px;top:1017.3px;width:230px;height:19.8px;background:#fff;border:1px solid #cdcdcd;border-top-color:#9d9d9d;box-shadow:inset 0 1px 1px rgba(0,0,0,.1)"></div>
<div class="abs" style="left:66px;top:1056.3px;width:88px;height:20.3px;border:1px solid #8f8f8f;border-radius:4.500px;background:linear-gradient(#ffffff,#f6f6f6 48%,#ececec 52%,#f4f4f4);box-shadow:0 1px 1px rgba(0,0,0,.13)"></div>
<div class="abs" style="left:66px;top:1058.7px;font-size:13px;line-height:16px;letter-spacing:-0.2px;white-space:nowrap;;width:88px;text-align:center;">Calculate</div>
<div class="abs" style="left:168px;top:1056.3px;width:72px;height:20.3px;border:1px solid #8f8f8f;border-radius:4.500px;background:linear-gradient(#ffffff,#f6f6f6 48%,#ececec 52%,#f4f4f4);box-shadow:0 1px 1px rgba(0,0,0,.13)"></div>
<div class="abs" style="left:168px;top:1058.7px;font-size:13px;line-height:16px;letter-spacing:-0.25px;white-space:nowrap;;width:72px;text-align:center;">Export</div>
<div class="abs" style="left:254px;top:1056.3px;width:70px;height:20.3px;border:1px solid #8f8f8f;border-radius:4.500px;background:linear-gradient(#ffffff,#f6f6f6 48%,#ececec 52%,#f4f4f4);box-shadow:0 1px 1px rgba(0,0,0,.13)"></div>
<div class="abs" style="left:254px;top:1058.7px;font-size:13px;line-height:16px;letter-spacing:-0.3px;white-space:nowrap;;width:70px;text-align:center;">Clear</div>
<div class="abs" style="left:66px;top:1102.3px;width:258px;height:20.3px;border:1px solid #8f8f8f;border-radius:4.500px;background:linear-gradient(#ffffff,#f6f6f6 48%,#ececec 52%,#f4f4f4);box-shadow:0 1px 1px rgba(0,0,0,.13)"></div>
<div class="abs" style="left:191.2px;top:1104.4px;font-size:13px;line-height:16px;letter-spacing:-0.3px;white-space:nowrap;">Help</div>
<svg width="17" height="17" viewBox="0 0 17 17" style="left:168px;top:1104px"><circle cx="8.500" cy="8.500" r="6.300" fill="none" stroke="#ededed" stroke-width="3.400"/><g stroke="#e8474c" stroke-width="3.200"><path d="M2.300 2.300l4 4M14.700 2.300l-4 4M2.300 14.700l4-4M14.700 14.700l-4-4"/></g><g fill="#fff" stroke="#d93a40" stroke-width=".9"><circle cx="2.600" cy="2.600" r="1.500"/><circle cx="14.400" cy="2.600" r="1.500"/><circle cx="2.600" cy="14.400" r="1.500"/><circle cx="14.400" cy="14.400" r="1.500"/></g></svg>
<div id="map"><svg width="1576" height="1046" viewBox="0 0 1576 1046" style="left:0;top:0">
<g fill="none" stroke="#40a07c" stroke-width="3.4" stroke-linecap="round" stroke-linejoin="round">
<path d="M-1 188.9 L98.9 221.7 L212.9 282.7 L265.5 342.2 L292.4 361.4 L318 381.9 L329.5 401.1 L332.1 421.6 L327 452.3 L323.9 480"/>
<path d="M318 381.9 L332.1 378.8 L408.9 371.6 L421.7 367.8 L460.2 355 L475.6 352.4 L490.9 356.2 L510.1 362.1 L519.1 355"/>
<path d="M332.8 245.3 L361.5 251.7 L367.9 257.6 L374.3 259.4"/>
<path d="M327.7 450 L323.8 475.6 L326.4 501.2 L334.1 524.3 L345.6 542.2 L355.9 555 L381.5 578.1 L409.7 608.9 L430.2 629.3 L437.9 639.6 L448.1 660.1 L458.3 675.5 L476.3 697.2 L492.9 715.2 L498.1 718.5"/>
<path d="M421.2 598.1 L443 608.9 L458.3 617 L473.7 622.2 L487.8 629.3 L505.7 637"/>
<path d="M487.8 626.8 L492.9 616.5 L499.9 608.9"/>
<path d="M496.8 617 L512.7 624.7"/>
<path d="M499.3 720 L484 766.1 L475 795.6 L469.9 814.8 L463.5 840.4 L455.8 866 L443 894.2 L432.7 910.9 L412.2 940.3 L381.5 983.9 L339.2 1045.4"/>
<path d="M475 795.6 L487.8 799.4 L490.4 802 L486 816.1 L482.7 818.6 L469.9 814.8"/>
<path d="M940.5 50 L945.1 48.2 L1032.2 32 L1061.7 32 L1078.3 29.5 L1116.8 15.4 L1127 13.3 L1130.9 16.7 L1146.2 34.1 L1162.9 41 L1172.6 44.1 L1179.6 55.1 L1186 61 L1201.3 82 L1211.6 91 L1218 98.6 L1229.5 123 L1233.4 135.8 L1231.6 164 L1230.8 199.8 L1231.6 225.5 L1229.5 235.7 L1219.3 271.6 L1209 304.9 L1203.9 317.7 L1200.8 330"/>
<path d="M1061.7 32 L1064.3 35.9 L1063 43.6 L1057.9 55.1 L1055.3 67.9 L1057.9 76.9 L1061.7 84.5 L1069.4 88.9"/>
<path d="M959.2 78.9 L964.3 77.6 L972 82 L975.9 89.7 L981 92.7 L990 95.3 L1004 108.9 L1008.7 117.9 L1025.8 131.9 L1025.8 135.8 L1018.9 152.4 L1015.6 184.5 L1012.2 202.4 L1009.2 205 L978.4 210.6 L972 215.2 L966.1 221.6 L965.1 230.6 L963.6 253.6 L950.2 299.8 L946.4 304.9 L937.4 312.1 L934.9 316.4"/>
<path d="M945.1 143.5 L961.8 123 L965.1 122.5 L984.1 138.9"/>
<path d="M951.5 135.8 L955.4 138.9 L965.6 138.4 L975.9 135.3"/>
<path d="M936.7 140.4 L945.1 147.3 L951.5 151.2 L992.5 146 L998.9 149.9 L1001 155 L996.4 161.4 L983.5 178.6"/>
<path d="M968.2 151.2 L969.5 166.5 L973.3 170.9 L988.7 169.6"/>
<path d="M965.1 162.7 L996.4 156.8"/>
<path d="M893.5 113.5 L919.5 82 L943.8 100.7"/>
<path d="M893.5 113.5 L931.8 147.3 L936.7 140.4"/>
<path d="M899 156.3 L910.5 167.8"/>
<path d="M1317.9 174.2 L1332 176.8 L1344.8 185.8 L1355.1 196 L1356.3 205 L1352.5 222.9 L1349.2 238.3 L1349.9 249.8 L1357.6 265.2 L1373 284.4 L1387.1 303.6 L1389.6 311.3 L1385.3 330"/>
<path d="M899 354.5 L1046.1 335.1 L1072.8 333.8 L1096.2 336.8 L1123 343.5 L1353.7 420.4 L1574.3 493.3"/>
<path d="M1213.3 290 L1208.2 306.7 L1203.2 318.4 L1193.9 353.5 L1191.5 356.2 L1181.5 354.2 L1166.5 353.5 L1153.1 350.2 L1139.7 343.5 L1128 338.5 L1124.7 340.8 L1123 343.5"/>
<path d="M1377.1 290 L1387.1 303.4 L1389.8 311.7 L1385.4 330.1 L1363.7 403.7 L1358.7 413.7 L1353.7 420.4"/>
<path d="M1428.9 445.5 L1429.9 451.5 L1437.2 453.8 L1450.6 452.1"/>
<path d="M1170.5 676.5 L1165.9 679.6 L1158.2 681.7 L1153.1 686.8 L1118.5 739.3 L1116.7 744.4 L1118.5 749.6 L1124.9 756 L1131.3 766.2 L1135.6 777.7 L1141.5 785.4 L1163.3 805.9 L1174.8 818.7 L1180 821.3 L1186.4 820"/>
<path d="M826.9 625 L830.2 629.1 L834.1 631.7 L866.1 638.1 L879.7 640.2"/>
<path d="M486 302.7 L488.2 299.7 L543.5 254 L546.4 252.5 L548.7 254.8 L557.5 271 L570.8 290.9 L581.1 309.3 L591.4 325.6 L595.1 320.4 L598.8 313 L616.5 298.3 L629.8 290.9 L642.3 282 L657.8 270.2 L675.5 254 L677 251"/>
<path d="M486 302.7 L500 318.2 L513.3 334.4 L525.1 350.6 L542 372"/>
<path d="M591.4 325.6 L591.1 328.2 L588.5 331.5 L582.6 335.6 L572.3 340.3 L565.6 342.1"/>
<path d="M565.6 343.3 L560.5 346.2 L554.6 354.3 L547.2 366.1 L542 372.8 L525.1 380.9 L516.2 387.5 L512.5 391.2 L525.1 402.3 L536.1 417.8"/>
<path d="M500 318.2 L528 294.3 L556.3 270.7"/>
<path d="M513.3 334.4 L541.3 310.8 L566.7 290.2 L570.8 290.9"/>
<path d="M525.1 350.6 L554.3 327 L572.3 310.5 L575.9 309 L581.1 309.3"/>
<path d="M469 352.8 L480.8 352.8 L495.6 358 L510.3 361.7 L514.7 359.5 L525.1 350.6"/>
<path d="M515.5 279.1 L528 294.3 L541.3 310.8 L554.6 327.3 L565.6 342.1 L578.2 356.5 L592.9 373.5 L607.7 391.2 L618 402.3 L631.3 416.3 L642.3 430 L666.2 458.3"/>
<path d="M626.8 271.7 L642.3 284 L660 304.2 L675.5 321.1 L695.7 338.8 L732.3 372.8 L747.5 387.2"/>
<path d="M619.5 299.7 L630.5 313.8 L642.5 328.4"/>
<path d="M635.7 336.6 L648.2 349.9 L665.2 372.8 L701.6 412.6 L710.5 424.4 L714.9 428.1 L720.8 431"/>
<path d="M619.5 299.7 L628.3 293.8 L636.4 300.5 L637.2 303.4 L627.6 310.8"/>
<path d="M631.3 313 L637.2 312.3"/>
<path d="M615 307.1 L620.2 308.2 L623.6 311.5 L622.4 315.2 L612.8 323.8 L609.1 323.3 L608.4 320.4 L618.7 312"/>
<path d="M592.2 345.5 L624.6 320.4"/>
<path d="M638.6 321.4 L659 304.5"/>
<path d="M665.2 372.5 L695.7 338.8 L699.1 328.5 L708.7 310.1 L732.3 287.9 L760.3 265.8 L769 255.5"/>
<path d="M614.3 355.1 L626.8 371.3 L631.3 377.9 L636.4 382.4 L649 392.7"/>
<path d="M648.2 349.9 L627.1 371 L608.4 392.4 L596.2 400.8 L575.2 418.8 L563.4 426.6"/>
<path d="M629.1 413.3 L649.7 393.4 L666.4 375.7"/>
<path d="M619.5 400.8 L637.2 382.4 L656 362.9"/>
<path d="M581.8 384.6 L595.9 400.3 L633 443.6"/>
<path d="M524.3 403 L577.4 357.3"/>
<path d="M634.1 185.8 L667.2 175.2 L670.7 191.7 L674.6 208.2 L677 213.7 L679.3 216.1 L695.9 231.8 L702.9 238.9 L712.4 251"/>
<path d="M634.1 185.8 L644.7 200.3 L655 214.5 L661.3 228.7 L680.1 248.3 L683.3 251"/>
<path d="M643.6 195.6 L668.3 188.5"/>
<path d="M654.2 214.1 L674.2 207.8"/>
<path d="M624.4 188 L631.4 208.2 L632.9 208.6 L645.1 204.3"/>
<path d="M647.1 235.3 L661.3 229.1"/>
<path d="M661.3 228.7 L677.4 214.9"/>
<path d="M676.2 168.5 L684.1 198.8 L691.1 216.1 L695.9 231.8"/>
<path d="M692.3 170.5 L695.9 184.6 L700.2 200.3 L702.9 205.1 L707.7 209 L711.6 211.4 L714.7 215.3 L720.2 221.6 L738.3 240.5"/>
<path d="M691.9 215.3 L710 210.6"/>
<path d="M708.4 154.3 L719.5 188.5 L715.5 200.3 L711.6 211.4 L710.8 216.9 L695.9 231.8 L680.9 246.8 L677 251"/>
<path d="M728.5 150 L732.8 165.7 L732 179.9 L730.5 184.6 L719.5 188.5"/>
<path d="M730.5 184.6 L743.1 190.9"/>
<path d="M732.8 166.5 L775.3 153.1 L776.1 150"/>
<path d="M775.3 153.1 L779.2 156.3 L780 161.8 L773.7 176.7"/>
<path d="M748.6 164.2 L750.1 168.1 L753.3 170.5 L773.7 176.7 L783.2 182.6 L789 180.7"/>
<path d="M718.7 219.2 L743.1 197.2 L750.1 193.3 L754.9 195.6 L760.4 203.5 L762.7 209.8 L763.9 216.1"/>
<path d="M775.3 191.3 L783.6 203.1"/>
<path d="M702.5 238.9 L712.4 231.8 L720.2 223.5"/>
<path d="M711.6 235.3 L719.5 244.4"/>
<path d="M783.2 182.6 L789 180.4 L799.5 172 L790.8 150 L774.9 112.8"/>
<path d="M789.2 194.8 L794.7 198 L797.9 201.1 L798.3 203.5"/>
<path d="M879.5 142.3 L873.4 150 L851.4 176 L818.3 216.5"/>
<path d="M851.4 176 L870.2 189.3 L889.1 205.1 L892.3 206.6 L899.4 203.5 L904.9 197.2 L912.7 187 L911.9 184.6 L908 182.3 L908.8 179.9 L928.5 154.7 L936.3 150"/>
<path d="M879.5 142.3 L887.6 150 L911.2 168.1"/>
<path d="M851.4 211 L858.4 218.4 L857.7 220 L851.4 226.7 L849 226.7 L842.7 220.8"/>
<path d="M790 242 L800.2 249.5 L805 250.3 L810.5 251"/>
<path d="M825.8 226.7 L810.5 251 L795.9 268.9"/>
<path d="M806.9 256.3 L830.1 275.6"/>
<path d="M854.5 244.4 L852.9 247.3 L830.1 275.6 L818.3 291.3 L786.1 335.4 L747.5 387.2 L727.9 413.3"/>
<path d="M834.5 292.5 L827 301.6"/>
<path d="M843.5 297.2 L835.2 308.3"/>
<path d="M847.4 311 L841.1 337.8 L838 342"/>
<path d="M863.2 314.2 L857.7 342"/>
<path d="M841.1 338.1 L857.7 342 L877.3 335.4 L890.7 326 L893.5 319.7"/>
<path d="M874.2 318.1 L873.4 300.8 L877.3 285.1 L880.5 278.8 L883.6 277.6 L893.1 288.2 L904.9 301.6 L913.5 311.8 L920.6 306.7"/>
<path d="M913.5 311.8 L906.4 317.3 L904.1 322"/>
<path d="M893.1 289.8 L888.3 293.7 L886.8 298.4 L886 309.4 L888.3 319.7"/>
<path d="M903.3 302 L900.1 304.7 L898.6 307.9"/>
<path d="M939 310.2 L935.5 316.5"/>
<path d="M779 296.1 L785.3 301.6"/>
<path d="M786.9 337.8 L792.4 342"/>
<path d="M680.1 248.3 L683.3 251 L695.9 260.6 L708.4 270.3"/>
<path d="M712.4 251 L720.2 259.9"/>
<path d="M715.5 269.3 L731.3 288.2 L742.3 300"/>
<path d="M675.4 256.7 L684.1 267 L698.2 280.5"/>
<path d="M691.9 290.6 L708.4 308.6"/>
<path d="M658.1 272.5 L682.5 295.4"/>
<path d="M673.1 307.5 L684.1 316.5 L698.2 328.3"/>
<path d="M730.5 254.4 L739.1 261.5 L740.1 264.6"/>
<path d="M744.6 305.5 L754.9 313.4 L762.7 319.7 L769.8 324"/>
<path d="M740.7 324.4 L747 329.9 L756.4 340.9 L758 342"/>
<path d="M745.4 326.7 L754.9 313.4 L770.6 291.3 L772.2 291 L778.5 296.1 L786.3 301.6"/>
<path d="M752.5 332.2 L762.7 319.7 L778.5 297.6"/>
<path d="M789 331.5 L780.8 342"/>
<path d="M480.1 780 L498.1 718.5 L505.7 693.4 L514.7 670.3 L527.5 644.7 L545.5 614 L581.1 552.3 L601.8 522.8 L616.5 506.5 L631.3 494.7 L681 456.9 L720.8 431 L751.8 409.7 L776.8 394.2 L803.4 383.1 L840.3 369.8 L881.6 356.8 L899.3 353.9 L919 351.8"/>
<path d="M664.7 459.1 L669.2 454.7 L675.1 453.6"/>
<path d="M720.8 431 L726.7 434.7 L728.9 440.6 L727.4 446.5 L722.3 451 L707.5 458.3 L695.7 462 L681 464.2 L675.8 467.9 L675.1 473.8 L678 480.5 L689.8 493.7 L695.7 514.4"/>
<path d="M706.8 442.1 L714.9 453.2"/>
<path d="M758 341.9 L770.9 357.3"/>
<path d="M785 339.6 L794.5 346.2 L803.4 349.9"/>
<path d="M794.5 346.2 L788.6 356.6 L789.4 361.7"/>
<path d="M770.9 358.8 L781.3 361.7 L789.4 361.7 L799 361.7 L807.8 365.4 L810.5 364.2 L809.3 361.7 L801.9 358.8"/>
<path d="M762.8 367.6 L771.7 375.7 L770.9 378.7 L765 385.3 L762.1 392"/>
<path d="M857.2 342.5 L855 352.1"/>
<path d="M543.5 413.6 L553.8 422.5 L577.4 437.9 L597.3 453.1"/>
<path d="M553.8 423.2 L548.7 429.8 L547.2 433.5 L549.4 436.5 L567.8 449 L577.4 437.2 L604 412.1"/>
<path d="M590.7 445.3 L593.7 440.9"/>
<path d="M492.6 421 L559.7 461.5"/>
<path d="M509.6 464.5 L554.6 496.2"/>
<path d="M525.8 478.5 L513.3 504.3"/>
<path d="M517.7 499.9 L523.6 502.8 L528 499.2 L538.3 485.9"/>
<path d="M545.7 493.3 L548.7 498.4 L535.4 513.9 L532.4 514.7 L529.5 511 L542.8 492.5"/>
<path d="M526.3 187.3 L524.4 193.9"/>
<path d="M598.6 187.3 L569.8 213.8"/>
<path d="M589 252.9 L615.5 226.4 L621.4 223.4 L622.9 226.4 L622.9 247 L611.1 260"/>
<path d="M728.5 150 L726.9 148.9 L770.4 134.9 L776.2 150"/>
<path d="M790.2 148.2 L791 134.9 L793.9 131.2 L810.1 121.6 L824.9 112 L835.2 132 L842.6 143.8 L847.8 149.7"/>
<path d="M830 139.3 L835.9 135.6"/>
<path d="M697.6 513.8 L698.7 516.4 L705.1 534.3 L707.6 540.7 L711.5 545.8 L715.3 548.4 L732 554.8 L751.2 561.8 L774.3 574 L788.3 586.2 L826.8 625"/>
<path d="M678.8 538.1 L670.5 515.1 L667.3 505.5 L667.9 502.3 L691 494.6 L737.1 478.6 L753.8 472.2"/>
<path d="M635.9 519.6 L667.3 508.7"/>
<path d="M673.1 516.4 L697.4 508 L739.7 492.7 L763.4 483.7"/>
<path d="M678.2 529.8 L702.5 521.5 L744.8 506.8 L769.1 498.4 L774.3 512.5 L779.4 526.6 L782.6 538.1 L762.7 545.2 L751.2 549"/>
<path d="M684.6 543.9 L706.4 536.2 L753.8 518.3 L774.3 510.6 L793.5 503.6"/>
<path d="M758.2 534.3 L778.1 526.6"/>
<path d="M737.1 479.2 L742.2 497.2 L749.9 518.3 L757.6 536.9 L762.1 549.7 L764 553.5 L793.5 573.4 L797.3 572.1 L798.6 570.2 L795.4 561.2 L792.2 558.6 L775.5 548.4 L773 544.5"/>
<path d="M657.7 513.8 L664.1 529.2"/>
<path d="M720.5 549.7 L723 542.6 L745.4 534.9 L749.9 548.4 L753.8 555.4 L751.8 561.2"/>
<path d="M732.6 554.8 L735.2 550.3 L748 545.8"/>
<path d="M712.1 548.4 L707.6 562.5 L703.8 575.3 L700.6 584.9 L698.1 592.6 L692.6 600.2 L682.2 609"/>
<path d="M780 481.1 L799.9 475.4 L822.3 487.5 L826.8 498.4 L835.7 524.1 L846 552.2 L838.3 576.6 L822.9 584.3"/>
<path d="M778.1 479.2 L783.2 492.7 L799.2 486.9 L804.4 490.1 L814 495.2 L815.9 498.4 L824.2 522.1 L834.5 554.2 L831.3 564.4 L828.1 568.9 L819.1 572.7 L803.7 581.1 L790.9 586.8"/>
<path d="M804.4 490.1 L810.8 485"/>
<path d="M790.9 492.7 L794.1 503.6 L802.4 528.5 L822.9 521.5 L833.8 523.4"/>
<path d="M806.9 493.9 L803.1 497.8 L812 522.8"/>
<path d="M825.5 528.5 L806.3 535.6 L819.1 571.5"/>
<path d="M817.2 534.3 L826.8 561.2 L830.6 563.8"/>
<path d="M798 571.5 L803.7 581.7"/>
<path d="M678.2 529.8 L664.3 530.2 L658.8 530.7 L642.9 528.3 L631.8 540 L624.5 546.6 L623.5 549.7 L621.8 577.4 L627 582.5 L620.4 590.5 L619.4 609"/>
<path d="M658.1 531.1 L658.8 533.5 L670.5 543.5"/>
<path d="M632.1 540.4 L638.7 549"/>
<path d="M649.8 576.7 L644.9 581.2 L641.5 581.2 L633.9 573.2 L634.6 552.5 L638.7 549 L645.6 541.1 L648 540.7 L667 559.4 L675.3 567.7 L691.9 583.6 L698.8 585.3"/>
<path d="M649.8 576.7 L644.9 570.8 L645.3 559.4 L647.7 557.7 L650.5 558 L659.4 566.3 L667 574.6 L682.2 589.8 L692.6 599.1"/>
<path d="M649.8 576.7 L658.1 582.5"/>
<path d="M643.5 597.4 L658.1 582.5 L666.7 574.6"/>
<path d="M659.4 566.6 L665.7 560.8"/>
<path d="M621.8 577.4 L627 582.5 L643.5 597.4 L656 609"/>
<path d="M675.3 567.7 L685.7 558.4 L694.7 554.2 L696.8 555.9 L694.7 564.2 L695.4 566 L699.5 569.4 L704 571.5"/>
<path d="M685.7 558.7 L691.9 565.6 L695.4 566.2"/>
<path d="M700.2 585 L726.5 609"/>
<path d="M652.2 592.2 L660.5 597.7 L669.8 607.1 L671.2 609"/>
<path d="M669.8 607.1 L678.1 598.8 L682.6 593.6"/>
<path d="M659.1 596.7 L666 589.8 L678.1 598.8"/>
<path d="M633.2 593.2 L630.1 596.7 L630.4 602.9 L636.6 609"/>
<path d="M700.9 609 L705 607.1 L709.2 609"/>
<path d="M619.3 609 L618.2 608.4 L627.6 617.6 L652.7 618 L655.7 620.2 L655 623.2 L630.6 648.1 L630.1 651.3 L637 658.2 L642.9 663.6 L651.3 678.9 L654.2 680.9 L663.1 676.4 L671.5 670.5"/>
<path d="M636.7 609 L638.4 610.8 L638.4 618.2"/>
<path d="M656 609 L670 623.7 L682.8 635.5 L704.5 656.7 L714.4 678.9 L724.2 698.6 L725.2 708.5 L723.7 722.3 L714.4 727"/>
<path d="M682.2 609 L670 623.7 L645.3 648.8 L637 658.2"/>
<path d="M671.2 609 L669 609.9 L677.9 600"/>
<path d="M682.8 611.8 L691.7 621.2"/>
<path d="M680.8 632.5 L691.7 621.2 L711.4 614.8 L712.9 615.8 L712.4 613.8 L705 606.9 L703.5 606.9 L693.7 617.3 L691.7 621.2"/>
<path d="M726.5 609 L729.2 613.8 L736.1 632.5 L735.1 641.9"/>
<path d="M645.3 649.3 L650.3 655.2 L654.2 659.2 L658.2 668 L663.1 675.9 L666.5 681.8 L667 686.8 L652.2 709.9 L643.9 724.2 L642.9 727"/>
<path d="M653.7 657.2 L668.5 641.9 L671.5 641.4 L693.2 662.1 L692.7 664.1 L680.8 676.4 L676.9 678.4"/>
<path d="M658.2 665.1 L663.1 663.6 L666 661.1 L676.9 649.3"/>
<path d="M671.5 670.5 L683.8 657.2"/>
<path d="M671.5 670.5 L676.9 681.8 L678.4 685.8 L677.9 690.7 L674.9 691.7"/>
<path d="M674.9 691.7 L690.7 700.6 L691.7 703.5 L700.6 709 L702.5 713.4 L708.4 719.3 L713.4 727"/>
<path d="M674.9 691.7 L662.1 716.4 L656.2 727"/>
<path d="M667 709.4 L683.8 719.3 L690.7 702.5"/>
<path d="M681.8 699.6 L675.9 711.4"/>
<path d="M652.7 708.5 L662.1 714.4"/>
<path d="M662.1 718.3 L670 723.3 L680.8 727"/>
<path d="M697.6 711.4 L689.7 727"/>
<path d="M705.5 721.3 L702.5 727"/>
<path d="M713.4 678.9 L704.5 682.3 L705.5 685.8 L714.4 704.5 L717.3 707.5 L724.7 708"/>
<path d="M723.7 722.3 L771.6 701.6 L773.5 703 L780.4 717.3 L776.5 727"/>
<path d="M755.8 715.4 L760.7 727"/>
<path d="M764.7 711.4 L772.5 727"/>
<path d="M746.9 727 L756.8 723.3"/>
<path d="M642.9 727 L642.4 728.7 L645.3 734.7 L654.2 749.4 L662.1 765.2 L668 778 L680.8 803.7 L684.8 814.5 L732.6 790.9 L730.6 782.5 L727.7 781.5 L721.3 785.9 L725.2 791.8"/>
<path d="M644.4 732.2 L638.4 735.1 L620.7 762.8 L606.9 781.5 L605.9 788.9 L603.9 792.8"/>
<path d="M622.2 763.7 L639.4 773.1 L642.9 776.1 L645.3 781 L648.3 785.9 L659.1 812.5 L663.1 813.5 L679.9 804.2 L720.3 783.5"/>
<path d="M611.8 780 L632.5 795.8 L648.3 785.9 L664.1 777 L684.8 766.7 L693.7 761.3 L712.4 730.7 L714.4 728.2"/>
<path d="M662.1 765.2 L681.8 754.9 L688.2 750.4 L690.2 748 L706.5 720.8"/>
<path d="M658.7 755.9 L668 752.4 L676.9 747 L680.8 744 L697.6 713.5"/>
<path d="M653.7 748 L671 740.1"/>
<path d="M631 767.7 L647.3 739.1"/>
<path d="M639.9 771.6 L652.2 749.4"/>
<path d="M646.8 764.2 L649.8 765.7 L662.1 790.9 L671.5 807.1"/>
<path d="M657.2 781 L670 807.6"/>
<path d="M676.9 773.1 L688.7 797.8"/>
<path d="M685.8 768.2 L698.6 792.8"/>
<path d="M694.2 761.3 L708.4 788.9"/>
<path d="M661.1 713.9 L653.7 727.7 L662.1 746.5 L666 751.4"/>
<path d="M662.1 718.4 L679.4 727.7 L671.5 739.6 L674.9 746.5 L680.8 756.3"/>
<path d="M668 724.8 L660.1 738.1"/>
<path d="M666 744.5 L668 750.4 L673.9 748"/>
<path d="M700.6 713 L708.4 720.4 L720.3 737.1 L718.3 767.2 L719.8 778 L721.3 783"/>
<path d="M723.7 710 L723.2 723.8 L729.2 737.6 L729.2 749.4 L728.2 774.1 L726.2 779 L721.3 783.5"/>
<path d="M714.4 728.2 L723.2 722.8"/>
<path d="M730.1 734.7 L759.7 721.8"/>
<path d="M720.3 744.5 L730.1 746 L737 745.5 L762.7 732.7 L766.6 737.6 L765.6 741.6 L737 758.3 L730.1 757.3"/>
<path d="M755.8 713.9 L766.6 736.6"/>
<path d="M764.7 710 L772.5 726.8 L775.5 727.7 L779.4 722.8 L780.4 717.9 L776.5 710"/>
</g>
<g fill="none" stroke="#ffff00" stroke-width="3.4" stroke-linecap="butt" stroke-linejoin="round">
<path d="M362.3 654.5 L381.5 639.6 L409.7 611.4 L421.2 598.1 L432.7 585.8 L458.3 552.5 L476.3 532 L484 516.6 L496.8 491 L510.9 465.4 L519.8 450 L528.7 430 L532.4 425.1 L538.3 419.2 L572.3 390.5 L593.7 373.5 L635.7 337.4 L690.3 288.7 L719.8 262.1 L728.9 251 L750.9 231 L762.7 217.6 L768.2 212.9 L774.5 209.4 L781.6 207 L789 205.5 L792.4 205.1 L798.7 205.5 L805 208.2 L835.6 231.8 L845.9 238.9 L865.5 251 L878.9 258.7 L894.6 271.7 L933.2 315.7 L934.9 316.4 L950.2 323.3 L970.7 326.7 L1001.5 322.8 L1034.8 318.2 L1045 319.8 L1052.7 324.9 L1051.1 323.4 L1056.1 330.1 L1057.8 335.8"/>
<path d="M750.9 231 L773 251 L804.2 280.3 L827.8 302.4 L838.8 310.2 L841.9 311.4 L900.1 322 L907.2 326"/>
<path d="M946.4 94.8 L943.8 100.7 L914.4 135.8 L901.7 150 L870.2 189.3 L851.4 212.1 L835.6 231.8"/>
<path d="M806.5 222.4 L781.4 256.7"/>
<path d="M804.2 280.3 L779 314.2 L770.6 324.4 L758 342 L734.5 372.8 L703.1 415.6 L674.3 453.9"/>
<path d="M666.2 458.3 L637.7 480.7 L601.8 508.9 L568.5 544.8 L541.6 576.8 L525 601.2 L512.7 624.2 L505.7 637 L491.7 665.2 L475.8 697.2"/>
</g>
<g fill="#a3279a" stroke="#4a0f45" stroke-width=".6">
<rect x="767.5" y="207.1" width="3" height="3" transform="rotate(0 769 208.6)"/>
<rect x="760.4" y="231.1" width="3" height="3" transform="rotate(37 761.9 232.6)"/>
<rect x="736.8" y="236.2" width="3" height="3" transform="rotate(74 738.3 237.7)"/>
<rect x="801.9" y="214.2" width="3" height="3" transform="rotate(21 803.4 215.7)"/>
<rect x="826.3" y="218.1" width="3" height="3" transform="rotate(58 827.8 219.6)"/>
<rect x="819.2" y="226.8" width="3" height="3" transform="rotate(5 820.7 228.3)"/>
<rect x="839.6" y="256.4" width="3" height="3" transform="rotate(42 841.1 257.9)"/>
<rect x="677.1" y="304.4" width="3" height="3" transform="rotate(79 678.6 305.9)"/>
<rect x="657.4" y="321.7" width="3" height="3" transform="rotate(26 658.9 323.2)"/>
<rect x="569.3" y="397.1" width="3" height="3" transform="rotate(63 570.8 398.6)"/>
<rect x="591.9" y="363.9" width="3" height="3" transform="rotate(10 593.4 365.4)"/>
<rect x="657.4" y="321.8" width="3" height="3" transform="rotate(47 658.9 323.3)"/>
<rect x="677" y="304.4" width="3" height="3" transform="rotate(84 678.5 305.9)"/>
</g>
<g fill="#40a07c">
<circle cx="804.9" cy="350.4" r="2.6"/>
<circle cx="1319.2" cy="174.2" r="2.6"/>
<circle cx="1323" cy="175.2" r="2.6"/>
<circle cx="1326.4" cy="176.3" r="2.6"/>
</g>
</svg></div>
<div class="abs" style="left:0px;top:1141.5px;width:1920px;height:32.5px;background:#ededed;border-radius:0 0 4px 4px;box-shadow:inset 0 -1px 0 #fafafa"></div>
<div class="abs" style="left:343px;top:1141.3px;width:1577px;height:1px;background:#b5b5b5"></div>
<div class="abs" style="left:6.3px;top:1151px;font-size:13px;line-height:16px;letter-spacing:-0.2px;white-space:nowrap;">Toggles the editing state of the current layer</div>
<div class="abs" style="left:1129px;top:1148.2px;width:20px;height:20px;border:1px solid #8a8a8a;background:linear-gradient(#fefefe,#f0f0f0 60%,#e4e4e4)"></div>
<svg width="16" height="16" viewBox="0 0 16 16" style="left:1131px;top:1150px"><path d="M3 3c3-2 6 0 6 3s-2 5-1 7c1.500 2 5 1 5.500-1.500" fill="none" stroke="#222" stroke-width="1.300"/><path d="M4 9c1-3 4-5 7-3M3.500 6.500l9 6" fill="none" stroke="#222" stroke-width="1.100"/><circle cx="9.500" cy="11" r="2.600" fill="none" stroke="#222" stroke-width="1.200"/><circle cx="9.500" cy="11" r="1" fill="#c33"/><path d="M11.500 4.500l2-1.500M13 6.500l1.500-.5" stroke="#222" stroke-width=".9"/></svg>
<div class="abs" style="left:1158.4px;top:1151.3px;font-size:13px;line-height:16px;letter-spacing:-0.1px;white-space:nowrap;">Coordinate:</div>
<div class="abs" style="left:1241px;top:1148.4px;width:299.5px;height:19.4px;background:#fff;border:1px solid #cdcdcd;border-top-color:#9d9d9d;box-shadow:inset 0 1px 1px rgba(0,0,0,.1)"></div>
<div class="abs" style="left:1241px;top:1151.3px;font-size:13px;line-height:16px;letter-spacing:-0.12px;white-space:nowrap;;width:296.5px;text-align:center;">447973,6234434</div>
<div class="abs" style="left:1550.2px;top:1151.3px;font-size:13px;line-height:16px;letter-spacing:-0.85px;white-space:nowrap;">Scale</div>
<div class="abs" style="left:1595px;top:1152.3px;width:93.5px;height:14.7px;background:#fff;border:1px solid #b9b9b9;border-top-color:#9a9a9a;border-radius:0 4px 4px 0"></div>
<div class="abs" style="left:1672px;top:1153px;width:1px;height:13.3px;background:#c9c9c9"></div>
<div class="abs" style="left:1597.6px;top:1152.79px;font-size:13.6px;line-height:16px;letter-spacing:-0.4px;white-space:nowrap;">1:16082</div>
<svg width="7" height="6" viewBox="0 0 7 6" style="left:1677px;top:1156.5px"><path d="M.5 .5h6L3.500 5.200z" fill="#444"/></svg>
<div class="abs" style="left:1695px;top:1148.2px;width:20px;height:20px;border:1px solid #8a8a8a;background:linear-gradient(#fefefe,#f0f0f0 60%,#e4e4e4)"></div>
<svg width="17" height="17" viewBox="0 0 17 17" style="left:1697px;top:1149.5px"><path d="M3 15.500c4-.5 7.500-4 11.500-13-2 7-4.500 12-9.500 13.500z" fill="#8a8a8a" stroke="#555" stroke-width=".7"/><circle cx="5.500" cy="5.500" r="3.600" fill="#fff" stroke="#e0252b" stroke-width="1.300"/><path d="M3 3l5 5" stroke="#e0252b" stroke-width="1.300"/></svg>
<svg width="17" height="18" viewBox="0 0 17 18" style="left:1720.5px;top:1148px"><defs><linearGradient id="cbgs" x1="0" y1="0" x2="0" y2="1"><stop offset="0" stop-color="#f4f7fa"/><stop offset=".5" stop-color="#cfdae6"/><stop offset="1" stop-color="#e3ebf3"/></linearGradient></defs><rect x="1" y="3.800" width="13" height="13" rx="2.600" fill="url(#cbgs)" stroke="#595a78" stroke-width="1"/><path d="M4 8.600l3.600 4.500 6.900-10.600" fill="none" stroke="#182838" stroke-width="2.200" stroke-linecap="round" stroke-linejoin="round"/></svg>
<div class="abs" style="left:1739.2px;top:1151.3px;font-size:13px;line-height:16px;letter-spacing:-0.4px;white-space:nowrap;">Render</div>
<div class="abs" style="left:1789.3px;top:1151.3px;font-size:13px;line-height:16px;letter-spacing:-0.5px;white-space:nowrap;color:#3c4656">EPSG:32734</div>
<div class="abs" style="left:1874px;top:1149px;width:20px;height:18.5px;border:1px solid #8a8a8a;background:linear-gradient(#fefefe,#f0f0f0 60%,#e4e4e4)"></div>
<svg width="16" height="16" viewBox="0 0 16 16" style="left:1876px;top:1150.3px"><circle cx="8" cy="8" r="6.500" fill="#b5b5b5" stroke="#7a7a7a" stroke-width="1"/><ellipse cx="8" cy="8" rx="3" ry="6.500" fill="none" stroke="#7a7a7a" stroke-width=".9"/><path d="M1.500 8h13M8 1.500v13M2.500 4.500h11M2.500 11.500h11" stroke="#7a7a7a" stroke-width=".9"/></svg>
<svg width="13" height="13" viewBox="0 0 13 13" style="left:1905px;top:1159px"><path d="M12.500 1L1 12.500M12.500 5L5 12.500M12.500 9L9 12.500" stroke="#8e8e8e" stroke-width="1"/><path d="M12.500 2L2 12.500M12.500 6L6 12.500M12.500 10L10 12.500" stroke="#fdfdfd" stroke-width="1"/></svg>
</div>
</body>
</html>
